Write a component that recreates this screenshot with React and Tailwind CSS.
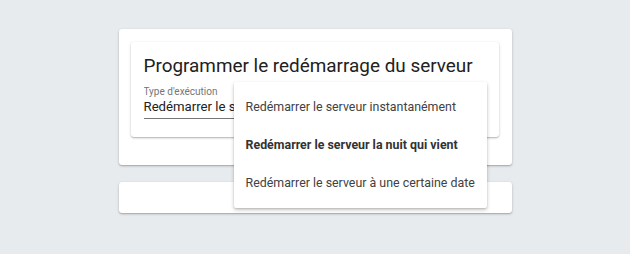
export default function App() {
  return (
    <div className="min-h-[254px] bg-[#e8ebee] pt-[29px] font-['Roboto',sans-serif]">
      <div className="relative mx-auto w-[393px]">
        <div className="h-[136px] rounded-[3px] bg-white pt-[13px] pl-[12px] shadow-[0_1px_3px_rgba(0,0,0,0.2),0_1px_1px_rgba(0,0,0,0.14)]">
          <div className="h-[95px] w-[368px] rounded-[3px] bg-white px-[13px] pt-[11px] shadow-[0_1px_3px_rgba(0,0,0,0.2),0_1px_1px_rgba(0,0,0,0.14)]">
            <h1 className="whitespace-nowrap text-[18.9px] leading-[26px] text-[#212121]">Programmer le redémarrage du serveur</h1>
            <div className="mt-[7px] w-[222px] overflow-hidden border-b border-[#757575]">
              <div className="text-[10px] leading-[12px] text-[#757575]">Type d'exécution</div>
              <div className="whitespace-nowrap pb-[2px] text-[13.2px] leading-[18px] text-[#212121]">Redémarrer le serveur la nuit qui vient</div>
            </div>
          </div>
        </div>
        <div className="mt-[17px] h-[31px] rounded-[3px] bg-white shadow-[0_1px_3px_rgba(0,0,0,0.2),0_1px_1px_rgba(0,0,0,0.14)]"></div>

        <div className="absolute left-[115px] top-[53px] w-[253px] rounded-[2px] bg-white py-[6px] shadow-[0_2px_4px_rgba(0,0,0,0.2),0_1px_2px_rgba(0,0,0,0.14)]">
          <div className="flex h-[38px] items-center whitespace-nowrap px-[12px] text-[12.4px] text-[#424242]">Redémarrer le serveur instantanément</div>
          <div className="flex h-[38px] items-center whitespace-nowrap px-[12px] text-[12.4px] font-bold text-[#333]">Redémarrer le serveur la nuit qui vient</div>
          <div className="flex h-[38px] items-center whitespace-nowrap px-[12px] text-[12.4px] text-[#424242]">Redémarrer le serveur à une certaine date</div>
        </div>
      </div>
    </div>
  )
}
